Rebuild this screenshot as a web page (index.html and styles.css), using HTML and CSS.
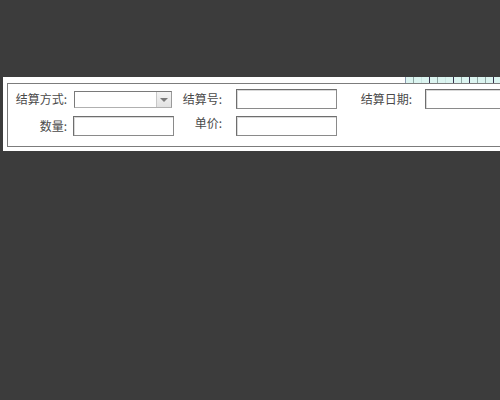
FILE: index.html
```html
<!DOCTYPE html>
<html lang="zh">
<head>
<meta charset="utf-8">
<link rel="stylesheet" href="styles.css">
</head>
<body>
<div class="page">
  <div class="panel">
    <div class="strip">
      <span class="tile t1"></span><span class="tile t2"></span><span class="tile t3"></span><span class="tile t4"></span><span class="tile t2"></span><span class="tile t3"></span><span class="tile t4"></span><span class="tile t2"></span><span class="tile t4"></span><span class="tile t2"></span><span class="tile t2"></span><span class="tile t4"></span>
    </div>
    <div class="box">
      <div class="form">
        <label class="lbl">结算方式:</label>
        <div class="cell"><div class="select"><span class="sel-text"></span><span class="sel-btn"><span class="arrow"></span></span></div></div>
        <label class="lbl">结算号:</label>
        <div class="cell"><input class="inp w101" type="text"></div>
        <label class="lbl">结算日期:</label>
        <div class="cell"><input class="inp w100" type="text"></div>

        <label class="lbl">数量:</label>
        <div class="cell"><input class="inp w101" type="text"></div>
        <label class="lbl top">单价:</label>
        <div class="cell"><input class="inp w101" type="text"></div>
        <div></div>
        <div></div>
      </div>
    </div>
  </div>
</div>
</body>
</html>
```

FILE: styles.css
```css
html, body {
  margin: 0;
  padding: 0;
  background: #3c3c3c;
  overflow: hidden;
}
.page {
  padding: 77px 0 0 3px;
  width: 500px;
  box-sizing: border-box;
}
.panel {
  background: #ffffff;
  padding: 0 0 4px 4px;
  overflow: hidden;
}
.strip {
  height: 6px;
  display: flex;
  padding-left: 398px;
  overflow: hidden;
}
.tile {
  width: 7px;
  height: 6px;
  background: #dcf5f1;
  border-left: 1px solid #9aa;
  flex: none;
}
.tile.t1 { border-left-color: #8a9ab0; }
.tile.t2 { border-left-color: #8fa8a4; }
.tile.t3 { border-left-color: #c9e6e2; }
.tile.t4 { border-left-color: #3a3550; }
.box {
  border: 1px solid #7c7c7c;
  border-right: none;
  box-sizing: border-box;
  height: 64px;
  overflow: hidden;
}
.form {
  display: grid;
  grid-template-columns: 60px 106px 62px 101px 88px 100px;
  grid-template-rows: 20px 20px;
  row-gap: 7px;
  padding-top: 5px;
  font-family: "Noto Sans CJK SC", "Noto Sans", sans-serif;
  font-size: 12px;
  color: #4a4a4a;
}
.lbl {
  text-align: right;
  align-self: center;
  line-height: 14px;
  white-space: nowrap;
}
.lbl.top { align-self: start; }
.form > .lbl:nth-child(1) { padding-right: 1px; }
.form > .lbl:nth-child(3) { padding-right: 14px; }
.form > .lbl:nth-child(5) { padding-right: 13px; }
.form > .lbl:nth-child(7) { padding-right: 1px; }
.form > .lbl:nth-child(9) { padding-right: 14px; }
.cell {
  display: flex;
  align-items: center;
}
.form > .cell:nth-child(2),
.form > .cell:nth-child(8) {
  padding-left: 5px;
}
.inp {
  box-sizing: border-box;
  height: 20px;
  margin: 0;
  padding: 0 2px;
  border: 1px solid #8a8a8a;
  border-top-color: #6e6e6e;
  border-left-color: #6e6e6e;
  box-shadow: inset 1px 1px 0 #d8d8d8;
  background: #fff;
  outline: none;
}
.w101 { width: 101px; }
.w100 { width: 100px; }
.select {
  box-sizing: border-box;
  margin-left: 1px;
  width: 98px;
  height: 17px;
  display: flex;
  border: 1px solid #7a7a7a;
  border-right-color: #9a9a9a;
  border-bottom-color: #b0b0b0;
  background: #fff;
}
.sel-text { flex: 1; }
.sel-btn {
  width: 15px;
  box-sizing: border-box;
  border-left: 1px solid #c8c8c8;
  background: linear-gradient(#f4f4f4, #e2e2e2);
  display: flex;
  align-items: center;
  justify-content: center;
}
.arrow {
  width: 0;
  height: 0;
  border-left: 4px solid transparent;
  border-right: 4px solid transparent;
  border-top: 4px solid #7a7a7a;
  margin-top: 1px;
}
```
